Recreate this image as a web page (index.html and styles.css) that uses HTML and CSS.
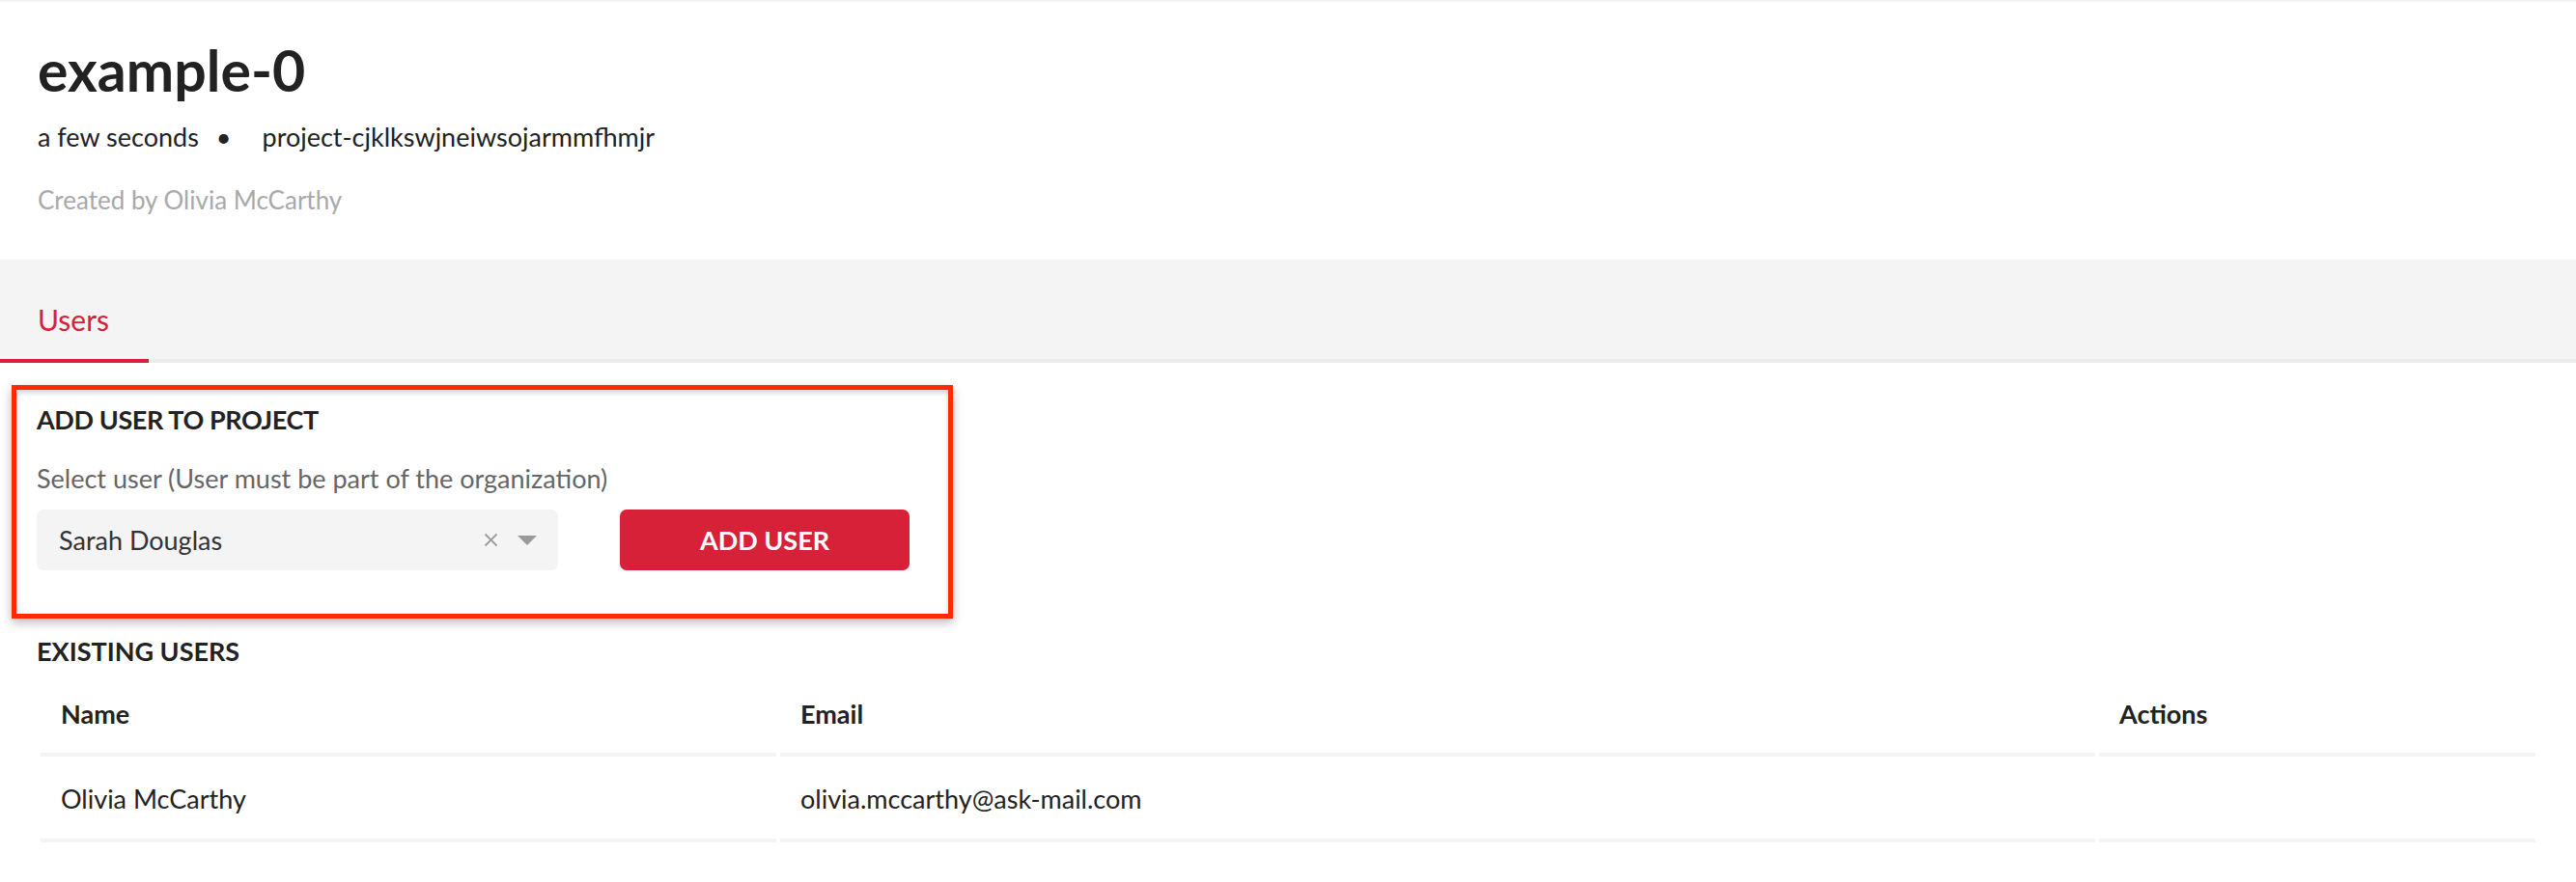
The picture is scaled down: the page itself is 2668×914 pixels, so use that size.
FILE: index.html
```html
<!DOCTYPE html>
<html lang="en">
<head>
<meta charset="utf-8">
<title>example-0</title>
<link rel="stylesheet" href="styles.css">
</head>
<body>
<header class="project-header">
  <h1 class="project-title">example-0</h1>
  <div class="project-meta">
    <span>a few seconds</span>
    <span class="meta-dot">•</span>
    <span>project-cjklkswjneiwsojarmmfhmjr</span>
  </div>
  <div class="project-creator">Created by Olivia McCarthy</div>
</header>

<nav class="tabs">
  <div class="tab tab-active">Users</div>
</nav>

<main class="content">
  <section class="add-card">
    <h2 class="section-title">ADD USER TO PROJECT</h2>
    <div class="field-label">Select user (User must be part of the organization)</div>
    <div class="add-row">
      <div class="select">
        <span class="select-value">Sarah Douglas</span>
        <span class="select-icons">
          <svg class="icon-clear" width="15" height="15" viewBox="0 0 15 15"><path d="M1.5 1.5 L13.5 13.5 M13.5 1.5 L1.5 13.5" stroke="#9a9a9a" stroke-width="1.8" fill="none"/></svg>
          <svg class="icon-caret" width="20" height="10" viewBox="0 0 20 10"><path d="M0 0 L20 0 L10 10 Z" fill="#9a9a9a"/></svg>
        </span>
      </div>
      <button class="btn-primary">ADD USER</button>
    </div>
  </section>

  <h2 class="section-title existing-title">EXISTING USERS</h2>
  <table class="users-table">
    <colgroup>
      <col class="col-name">
      <col class="col-email">
      <col class="col-actions">
    </colgroup>
    <thead>
      <tr><th>Name</th><th>Email</th><th>Actions</th></tr>
    </thead>
    <tbody>
      <tr><td>Olivia McCarthy</td><td>olivia.mccarthy@ask-mail.com</td><td></td></tr>
    </tbody>
  </table>
</main>
</body>
</html>
```

FILE: styles.css
```css
* { box-sizing: border-box; }

html, body {
  margin: 0;
  padding: 0;
  background: #ffffff;
}

body {
  font-family: "Lato", "Liberation Sans", sans-serif;
  font-size: 27px;
  line-height: 1.5;
  color: #222222;
}

.project-header {
  border-top: 2px solid #f4f4f4;
  padding: 36px 39px 42px;
}

.project-title {
  margin: 0;
  font-size: 59px;
  line-height: 1.2;
  font-weight: 700;
  color: #222222;
}

.project-meta {
  margin-top: 13px;
  display: flex;
  align-items: baseline;
  color: #222222;
}

.meta-dot {
  margin: 0 32px 0 18px;
}

.project-creator {
  margin-top: 26px;
  font-size: 26px;
  color: #a9a9a9;
}

.tabs {
  display: flex;
  background: #f4f4f4;
  border-bottom: 4px solid #ececec;
}

.tab {
  font-size: 30px;
  padding: 40px 41px 18px 39px;
  margin-bottom: -4px;
  border-bottom: 4px solid transparent;
}

.tab-active {
  color: #d7213a;
  border-bottom-color: #d7213a;
}

.content {
  padding: 0 38px;
}

.add-card {
  width: 975px;
  margin: 23px 0 0 -26px;
  border: 5px solid #ff2a00;
  padding: 11px 40px 45px 21px;
  box-shadow: 0 4px 10px rgba(0, 0, 0, 0.28), inset 0 3px 5px rgba(0, 0, 0, 0.18);
  background: #ffffff;
}

.section-title {
  margin: 0;
  font-size: 27px;
  line-height: 1.5;
  font-weight: 700;
  color: #222222;
}

.add-card .section-title {
  letter-spacing: -0.4px;
}

.field-label {
  margin-top: 20px;
  color: #666666;
}

.add-row {
  margin-top: 12px;
  display: flex;
  align-items: center;
  gap: 64px;
}

.select {
  width: 540px;
  height: 63px;
  background: #f4f4f4;
  border-radius: 7px;
  display: flex;
  align-items: center;
  justify-content: space-between;
  padding: 0 22px 0 23px;
  color: #333333;
}

.select-icons {
  display: flex;
  align-items: center;
  gap: 20px;
}

.icon-clear, .icon-caret {
  display: block;
}

.btn-primary {
  width: 300px;
  height: 63px;
  border: none;
  border-radius: 7px;
  background: #d72139;
  color: #ffffff;
  font-family: inherit;
  font-size: 27px;
  font-weight: 700;
  line-height: 1;
  padding: 0;
}

.existing-title {
  margin-top: 14px;
}

.users-table {
  width: 100%;
  table-layout: fixed;
  border-collapse: separate;
  border-spacing: 4px 0;
}

.col-name { width: 762px; }
.col-email { width: 1362px; }

.users-table th,
.users-table td {
  text-align: left;
  padding: 24px 21px 20px;
  border-bottom: 4px solid #f4f4f4;
  font-size: 27px;
  line-height: 1.5;
  color: #222222;
}

.users-table th {
  font-weight: 700;
  padding-top: 24px;
  padding-bottom: 20px;
}

.users-table td {
  font-weight: 400;
}
```
